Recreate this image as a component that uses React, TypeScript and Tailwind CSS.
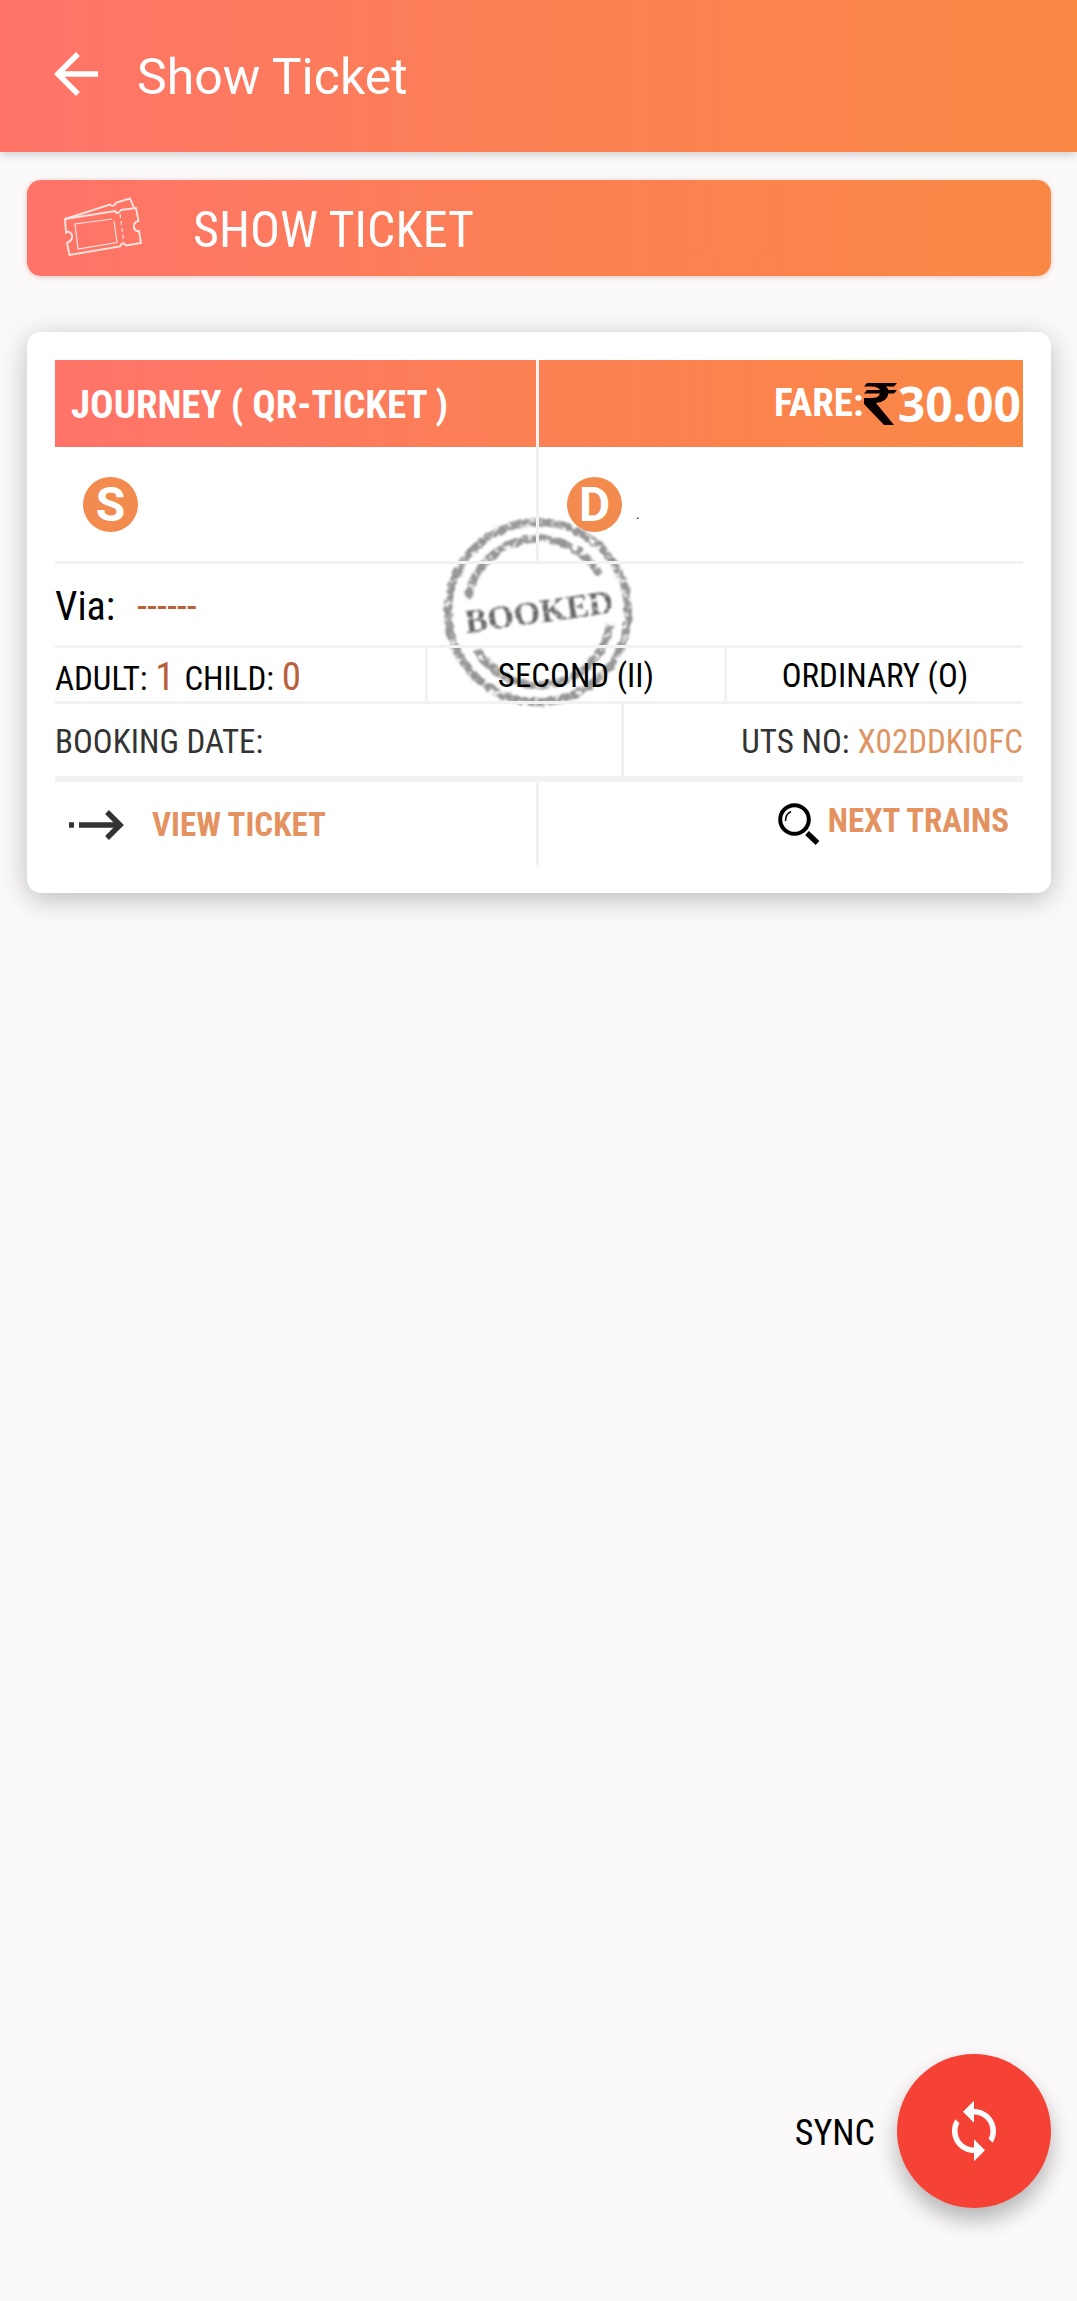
import { MdArrowBack, MdSync } from 'react-icons/md';

function TicketIcon() {
  return (
    <svg viewBox="0 0 80 62" className="h-[62px] w-20 shrink-0" fill="none" stroke="white" strokeWidth="1.9" opacity="0.8" aria-hidden="true">
      <path d="M2 22 L52 14 Q54 18.500 58 13 L73 11 L75.500 24 Q70 25 71 31 Q73 35 76 34 L78 46 L63 48.500 Q59.500 44 57 49.500 L6.500 58 L4 46 Q10 43 9 38 Q6 33 3 35.500 Z" />
      <path d="M2 22 L47 7.500 Q50 11 53.500 5.500 L67 1.500 L71 11" />
      <path d="M49 22 L12 27 L15 52 L54 45.500 L51 24" strokeWidth="1.200" />
      <path d="M57 17 L61 46" strokeWidth="1.200" strokeDasharray="4 3" />
    </svg>
  );
}

function Stamp() {
  return (
    <svg viewBox="0 0 200 200" className="absolute top-[180px] left-1/2 h-[200px] w-[200px] -translate-x-1/2" aria-hidden="true">
      <defs>
        <filter id="rough" x="-0.1" y="-0.1" width="1.2" height="1.2">
          <feTurbulence type="fractalNoise" baseFrequency="0.18" numOctaves="2" seed="7" result="noise" />
          <feDisplacementMap in="SourceGraphic" in2="noise" scale="5" xChannelSelector="R" yChannelSelector="G" result="edge" />
          <feColorMatrix in="noise" type="matrix" values="0 0 0 0 0  0 0 0 0 0  0 0 0 0 0  0 0 4 0 -1" result="wear" />
          <feComposite in="edge" in2="wear" operator="in" />
          <feGaussianBlur stdDeviation="1.2" />
        </filter>
        <filter id="ink" x="-0.1" y="-0.3" width="1.2" height="1.6">
          <feTurbulence type="fractalNoise" baseFrequency="0.2" numOctaves="2" seed="3" result="noise" />
          <feDisplacementMap in="SourceGraphic" in2="noise" scale="2" xChannelSelector="R" yChannelSelector="G" result="edge" />
          <feColorMatrix in="noise" type="matrix" values="0 0 0 0 0  0 0 0 0 0  0 0 0 0 0  0 0 4 0 -0.900" result="wear" />
          <feComposite in="edge" in2="wear" operator="in" />
          <feGaussianBlur stdDeviation="1" />
        </filter>
      </defs>
      <g filter="url(#rough)" fill="none" stroke="#959595" strokeWidth="8">
        <circle cx="99" cy="100" r="90" />
        <path d="M29 86 A71 71 0 0 1 161 63" />
        <path d="M38 138 A72 72 0 0 0 171 112" />
      </g>
      <text x="100" y="111" textAnchor="middle" transform="rotate(-8 100 100)" fontSize="34" fontWeight="700" fill="#636363" filter="url(#ink)" className="font-['Liberation_Serif',serif]">BOOKED</text>
    </svg>
  );
}

function Rupee() {
  return (
    <svg viewBox="0 0 33 42" className="h-[42px] w-[33px] shrink-0" role="img" aria-label="Rupees">
      <path fill="#080000" d="M3 0 H33 L30 3.500 H22 Q24 5.500 24.500 7 H33 L30 10.500 H24.500 Q23 19 12 20 L30 42 H20 L0 21 V15 H7 Q15 15 16 10.500 H0 L3 7 H16 Q14 3.500 7 3.500 H0 Z" />
    </svg>
  );
}

function Magnifier() {
  return (
    <svg viewBox="0 0 42 42" className="h-[42px] w-[42px] shrink-0" fill="none" stroke="black" aria-hidden="true">
      <circle cx="16.500" cy="16.500" r="14.300" strokeWidth="4" />
      <path d="M29 30 L39.500 40" strokeWidth="5.500" />
      <path d="M7.500 18 Q7.500 11 13 8.500" strokeWidth="1.500" />
    </svg>
  );
}

function DottedArrow() {
  return (
    <svg viewBox="0 0 55 30" className="h-[30px] w-[55px] shrink-0" fill="none" stroke="#333" aria-hidden="true">
      <path d="M0 15 H5 M10 15 H52" strokeWidth="5.500" />
      <path d="M38 2 L51 15 L38 28" strokeWidth="5.500" />
    </svg>
  );
}

function Badge({ children }: { children: string }) {
  return (
    <span className="flex size-[55px] items-center justify-center rounded-full bg-[#f38a4e] pt-[2px] font-['Roboto',sans-serif] text-[48px] leading-none font-bold text-white">
      {children}
    </span>
  );
}

export default function App() {
  return (
    <div className="flex min-h-screen flex-col bg-[#fbf9fa] font-['Roboto_Condensed','Roboto',sans-serif] text-black">
      <header className="flex h-[152px] items-center gap-7 bg-linear-to-r from-[#ff7369] via-[#fb8053] to-[#fa8845] pl-[43px] text-white shadow-[0_2px_10px_rgba(0,0,0,0.2)]">
        <button type="button" aria-label="Back" className="-mt-1">
          <MdArrowBack size={66} />
        </button>
        <h1 className="pt-[2px] font-['Roboto',sans-serif] text-[50px] leading-none">Show Ticket</h1>
      </header>

      <main className="pt-7 pr-[26px] pl-[27px]">
        <h2 className="flex h-24 items-center gap-[50px] rounded-[14px] bg-linear-to-r from-[#ff7369] via-[#fb8053] to-[#fa8845] pl-9 text-[50px] leading-none text-white shadow-[0_1px_5px_rgba(200,110,80,0.4)]">
          <TicketIcon />
          <span className="pt-1">SHOW TICKET</span>
        </h2>

        <section className="relative mt-14 rounded-[14px] bg-white p-7 shadow-[0_6px_28px_rgba(0,0,0,0.25)]">
          <Stamp />
          <div className="relative">
            <div className="grid h-[87px] grid-cols-2 bg-linear-to-r from-[#ff7369] via-[#fb8053] to-[#fa8845] text-[39px] leading-none font-bold text-white">
              <div className="flex items-center border-r-[3px] border-[#f2f2f2] pt-1 pl-4">JOURNEY ( QR-TICKET )</div>
              <div className="flex items-center justify-end pr-[2px]">
                FARE:
                <Rupee />
                <span className="pl-px font-['Noto_Sans',sans-serif] text-[48px]">30.00</span>
              </div>
            </div>
            <div className="grid h-[117px] grid-cols-2 border-b-[3px] border-[#f2f2f2]">
              <div className="flex items-center border-r-[3px] border-[#f2f2f2] pl-7"><Badge>S</Badge></div>
              <div className="flex items-center gap-[14px] pl-7"><Badge>D</Badge><span className="pt-5 text-sm">.</span></div>
            </div>
            <div className="flex h-[84px] items-center gap-[22px] border-b-[3px] border-[#f2f2f2] pt-1 text-[40px] leading-none">
              <span>Via:</span>
              <span className="text-[#b9603a]">------</span>
            </div>
            <div className="flex h-14 border-b-[3px] border-[#f2f2f2] text-[33px] leading-none">
              <div className="flex w-[373px] items-baseline gap-[10px] border-r-[3px] border-[#f2f2f2] pt-[10px]">
                <span>ADULT: <span className="text-[39px] leading-none text-[#b9603a]">1</span></span>
                <span>CHILD: <span className="text-[39px] leading-none text-[#b9603a]">0</span></span>
              </div>
              <div className="flex w-[299px] items-center justify-center border-r-[3px] border-[#f2f2f2] pt-[2px]">SECOND (II)</div>
              <div className="flex flex-1 items-center justify-center pt-[2px]">ORDINARY (O)</div>
            </div>
            <div className="flex h-[78px] border-b-[6px] border-[#f2f2f2] text-[33px] leading-none text-[#333]">
              <div className="flex w-[569px] items-center border-r-[3px] border-[#f2f2f2] pt-[2px]">BOOKING DATE:</div>
              <div className="flex flex-1 items-center justify-end gap-2 pt-[2px]">UTS NO:<span className="text-[#df9463]">X02DDKI0FC</span></div>
            </div>
            <div className="grid h-[83px] grid-cols-2 text-[33px] leading-none font-bold text-[#e49260]">
              <div className="flex items-center border-r-[3px] border-[#f2f2f2] pt-[2px] pl-[14px]">
                <button type="button" className="flex items-center gap-7"><DottedArrow />VIEW TICKET</button>
              </div>
              <div className="flex items-center justify-end pr-[14px]">
                <button type="button" className="flex items-center gap-2"><Magnifier /><span className="pb-[6px]">NEXT TRAINS</span></button>
              </div>
            </div>
          </div>
        </section>
      </main>

      <footer className="mt-auto flex items-center justify-end gap-[22px] pr-[26px] pb-[93px]">
        <label htmlFor="sync" className="pt-1 text-[36px] leading-none">SYNC</label>
        <button id="sync" type="button" className="flex size-[154px] items-center justify-center rounded-full bg-[#f64135] text-white shadow-[0_12px_22px_rgba(0,0,0,0.28)]">
          <MdSync size={66} />
        </button>
      </footer>
    </div>
  );
}
